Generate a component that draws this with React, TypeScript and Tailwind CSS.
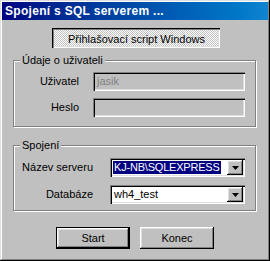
import React from "react";

const raised =
  "shadow-[inset_-1px_-1px_#000,inset_1px_1px_#fff,inset_-2px_-2px_#808080,inset_2px_2px_#dfdfdf]";
const sunken =
  "shadow-[inset_1px_1px_#808080,inset_2px_2px_#000,inset_-1px_-1px_#fff,inset_-2px_-2px_#dfdfdf]";

function Arrow() {
  return (
    <div className={`w-[16px] h-[15px] bg-[#c0c0c0] flex items-center justify-center ${raised}`}>
      <svg width="7" height="4" viewBox="0 0 7 4">
        <path d="M0 0h7L3.5 4z" fill="#000" />
      </svg>
    </div>
  );
}

function Group({ label, h, children }: { label: string; h: string; children: React.ReactNode }) {
  return (
    <div
      className={`relative ml-[11px] w-[243px] ${h} border border-[#808080] shadow-[inset_1px_1px_#fff,1px_1px_#fff]`}
    >
      <div className="absolute -top-[7px] left-[6px] px-[2px] bg-[#c0c0c0] leading-[13px]">{label}</div>
      {children}
    </div>
  );
}

export default function App() {
  return (
    <div
      className={`w-[270px] h-[261px] bg-[#c0c0c0] p-[2px] flex flex-col font-['Liberation_Sans',Arial,sans-serif] text-[11px] text-black ${"shadow-[inset_-1px_-1px_#000,inset_1px_1px_#dfdfdf,inset_-2px_-2px_#808080,inset_2px_2px_#fff]"}`}
    >
      <div className="h-[18px] flex items-center pl-[3px] bg-linear-to-r from-[#000080] to-[#1084d0] text-white font-bold text-[12px] tracking-[0.3px]">
        Spojení s SQL serverem ...
      </div>

      <div
        className="mt-[8px] ml-[50px] w-[168px] h-[20px] flex items-center justify-center pt-[2px] pl-[1px] bg-[repeating-conic-gradient(#fff_0_25%,#c0c0c0_0_50%)] bg-[length:2px_2px] shadow-[inset_1px_1px_#000,inset_2px_2px_#808080,inset_-1px_-1px_#fff,inset_-2px_-2px_#dfdfdf]"
      >
        Přihlašovací script Windows
      </div>

      <div className="mt-[12px]">
        <Group label="Údaje o uživateli" h="h-[67px]">
          <div className="flex flex-col gap-[7px] pt-[11px]">
            <div className="flex items-center gap-[14px]">
              <div className="w-[65px] text-right">Uživatel</div>
              <div className={`w-[152px] h-[19px] bg-[#c0c0c0] flex items-center pl-[4px] text-[#808080] ${sunken}`}>
                jasik
              </div>
            </div>
            <div className="flex items-center gap-[14px]">
              <div className="w-[65px] text-right">Heslo</div>
              <div className={`w-[152px] h-[19px] bg-[#c0c0c0] ${sunken}`} />
            </div>
          </div>
        </Group>
      </div>

      <div className="mt-[18px]">
        <Group label="Spojení" h="h-[66px]">
          <div className="flex flex-col gap-[8px] pt-[12px]">
            <div className="flex items-center gap-[17px]">
              <div className="w-[79px] text-right">Název serveru</div>
              <div className={`w-[135px] h-[19px] bg-white flex items-center justify-between p-[2px] ${sunken}`}>
                <span className="ml-[1px] bg-[#000080] text-white px-[1px] leading-[13px] tracking-[-0.2px]">
                  KJ-NB\SQLEXPRESS
                </span>
                <Arrow />
              </div>
            </div>
            <div className="flex items-center gap-[17px]">
              <div className="w-[79px] text-right">Databáze</div>
              <div className={`w-[135px] h-[19px] bg-white flex items-center justify-between p-[2px] ${sunken}`}>
                <span className="ml-[2px] leading-[13px]">wh4_test</span>
                <Arrow />
              </div>
            </div>
          </div>
        </Group>
      </div>

      <div className="mt-[16px] flex justify-center gap-[10px]">
        <div className="w-[74px] h-[22px] border border-black">
          <div
            className={`w-full h-full flex items-center justify-center ${"shadow-[inset_-1px_-1px_#000,inset_1px_1px_#fff,inset_-2px_-2px_#808080,inset_2px_2px_#dfdfdf]"}`}
          >
            Start
          </div>
        </div>
        <div className={`w-[74px] h-[22px] flex items-center justify-center ${raised}`}>Konec</div>
      </div>
    </div>
  );
}
